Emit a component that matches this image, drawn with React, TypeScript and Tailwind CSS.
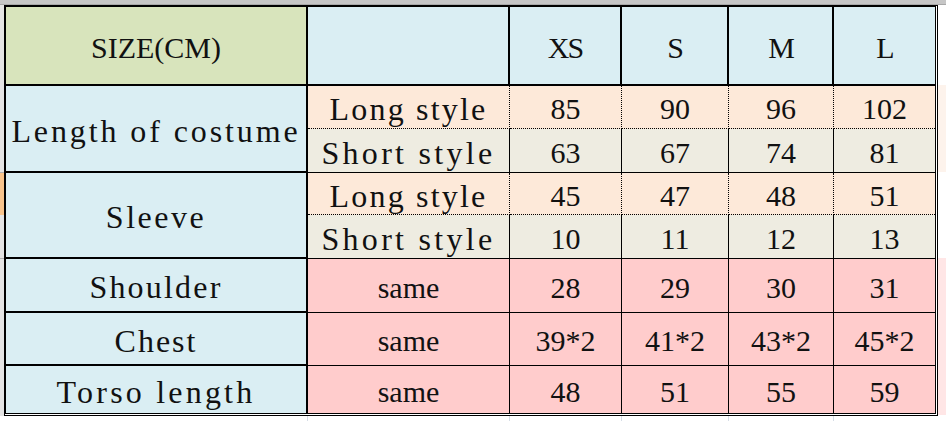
const serif = "font-['Liberation_Serif',serif]";
const label = `${serif} text-[32px] pt-[4px]`;
const num = `${serif} text-[30px] pt-[3px]`;

const sizes = ["XS", "S", "M", "L"];

type Row = {
  label?: string;
  track?: string;
  span?: boolean;
  sub: string;
  values: string[];
  bg: string;
  line: string;
};

const rows: Row[] = [
  { label: "Length of costume", track: "tracking-[2.9px]", span: true, sub: "Long style", values: ["85", "90", "96", "102"], bg: "bg-[#fde9d9]", line: "border-b border-dotted" },
  { sub: "Short style", values: ["63", "67", "74", "81"], bg: "bg-[#eeece1]", line: "border-b" },
  { label: "Sleeve", track: "tracking-[2.5px]", span: true, sub: "Long style", values: ["45", "47", "48", "51"], bg: "bg-[#fde9d9]", line: "border-b border-dotted" },
  { sub: "Short style", values: ["10", "11", "12", "13"], bg: "bg-[#eeece1]", line: "border-b" },
  { label: "Shoulder", track: "tracking-[2.2px]", sub: "same", values: ["28", "29", "30", "31"], bg: "bg-[#ffcccc]", line: "border-b" },
  { label: "Chest", track: "tracking-[2px]", sub: "same", values: ["39*2", "41*2", "43*2", "45*2"], bg: "bg-[#ffcccc]", line: "border-b" },
  { label: "Torso length", track: "tracking-[3.2px]", sub: "same", values: ["48", "51", "55", "59"], bg: "bg-[#ffcccc]", line: "" },
];

function SizeTable() {
  return (
    <div className="border-t-2 border-l-2 border-r-[3px] border-b-[3px] border-double border-black">
      <div className="grid grid-cols-[302px_202px_112px_107px_105px_101px] grid-rows-[79px_43px_44px_42px_44px_54px_53px_47px] text-[#111]">
        {/* header */}
        <div className={`${serif} text-[30px] pt-[3px] flex items-center justify-center bg-[#d8e4bc] border-r-2 border-b-2 border-black`}>
          SIZE(CM)
        </div>
        <div className="bg-[#daeef3] border-r-2 border-b-2 border-black" />
        {sizes.map((s, i) => (
          <div
            key={s}
            className={`${serif} text-[30px] pt-[3px] tracking-[-2px] flex items-center justify-center bg-[#daeef3] border-b-2 border-black ${i < 3 ? "border-r-2" : ""}`}
          >
            {s}
          </div>
        ))}

        {rows.map((r, idx) => {
          const last = idx === rows.length - 1;
          const subTrack = r.sub === "Long style" ? "tracking-[2.2px]" : "tracking-[3.3px]";
          return (
            <div key={idx} className="contents">
              {r.label && (
                <div
                  className={`${label} ${r.track} flex items-center justify-center bg-[#daeef3] border-r-2 border-black ${r.span ? "row-span-2" : ""} ${last ? "" : "border-b-2"}`}
                >
                  {r.label}
                </div>
              )}
              <div
                className={`${r.sub === "same" ? num : `${label} ${subTrack}`} flex items-center justify-center ${r.bg} border-r border-black ${r.line}`}
              >
                {r.sub}
              </div>
              {r.values.map((v, i) => (
                <div
                  key={i}
                  className={`${num} flex items-center justify-center ${r.bg} border-black ${r.line} ${i < 3 ? "border-r" : ""}`}
                >
                  {v}
                </div>
              ))}
            </div>
          );
        })}
      </div>
    </div>
  );
}

export default function App() {
  return (
    <div className="w-[946px] h-[421px] bg-white overflow-hidden flex flex-col">
      <div className="h-[5px] shrink-0 bg-[#c6c6c6] border-b border-[#a8a8a8]" />
      <div className="flex">
        <div className="w-[4px] shrink-0 flex flex-col bg-[#e4e4e4]">
          <div className="h-[168px] border-b border-[#b0b0b0]" />
          <div className="h-[42px] bg-[#f8c48c]" />
          <div className="h-[44px] border-b border-[#b0b0b0]" />
        </div>
        <SizeTable />
        <div className="flex-1 flex flex-col">
          <div className="h-[80px] bg-white" />
          <div className="h-[87px] bg-[#fdf3ec]" />
          <div className="h-[86px] bg-white" />
          <div className="h-[157px] bg-[#ffe6e6]" />
        </div>
      </div>
      <div className="flex-1 flex">
        <div className="w-[308px] border-r border-[#d6dde6]" />
        <div className="w-[202px] border-r border-[#d6dde6]" />
        <div className="w-[112px] border-r border-[#d6dde6]" />
        <div className="w-[107px] border-r border-[#d6dde6]" />
        <div className="w-[105px] border-r border-[#d6dde6]" />
      </div>
    </div>
  );
}
